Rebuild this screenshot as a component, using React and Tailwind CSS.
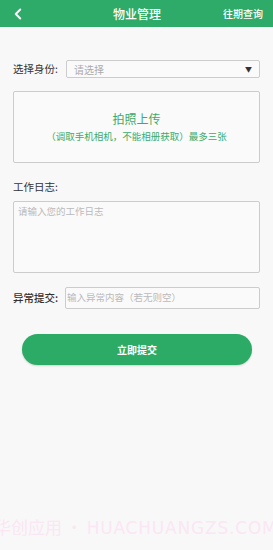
import React from 'react';
import { ChevronLeft } from 'lucide-react';

const font = { fontFamily: '"Noto Sans CJK SC", "Noto Sans", sans-serif' };

const App = () => {
  return (
    <div className="relative w-full min-h-[550px] bg-[#f8f8f8] overflow-hidden" style={font}>
      <div className="h-[27px] bg-[#2eab68] flex items-center justify-between px-[10px] text-white">
        <ChevronLeft size={18} strokeWidth={2.6} className="-ml-[1px]" />
        <h1 className="text-[12px] font-medium leading-none pl-[24px]">物业管理</h1>
        <span className="text-[10px] font-medium leading-none">往期查询</span>
      </div>

      <div className="px-[13px] pt-[33px]">
        <div className="flex items-center h-[18px]">
          <span className="w-[53px] text-[10.5px] text-[#333]">选择身份:</span>
          <div className="flex-1 h-[18px] border border-[#ccc] rounded-[2px] bg-[#fafafa] flex items-center justify-between px-[7px]">
            <span className="text-[10px] text-[#aaa]">请选择</span>
            <span className="text-[7px] text-[#333]">▼</span>
          </div>
        </div>

        <div className="mt-[13px] h-[72px] border border-[#ccc] rounded-[2px] bg-[#fafafa] flex flex-col items-center justify-center text-[#3aac6c]">
          <span className="text-[12px] leading-none">拍照上传</span>
          <span className="text-[9.5px] leading-none mt-[7px]">（调取手机相机，不能相册获取）最多三张</span>
        </div>

        <div className="mt-[19px] text-[10.5px] text-[#333] leading-none">工作日志:</div>
        <div className="mt-[8px] h-[72px] border border-[#ccc] rounded-[2px] bg-[#fafafa] px-[4px] pt-[5px] text-[9.5px] leading-none">
          <span className="text-[#bbb]">请输入您的工作日志</span>
        </div>

        <div className="mt-[14px] flex items-center">
          <span className="w-[52px] text-[10.5px] text-[#333] font-medium">异常提交:</span>
          <div className="flex-1 h-[22px] border border-[#ccc] rounded-[2px] bg-[#fafafa] flex items-center px-[1px] overflow-hidden">
            <span className="text-[9.5px] text-[#bbb] whitespace-nowrap">输入异常内容（若无则空）</span>
          </div>
        </div>

        <button className="mt-[25px] mx-[9px] w-[230px] h-[31px] rounded-full bg-[#2bab66] text-white text-[10px] font-bold shadow-[0_1px_2px_rgba(0,0,0,0.15)]">
          立即提交
        </button>
      </div>

      <div className="absolute left-[-6px] top-[518px] whitespace-nowrap text-[17px] text-[#fbe6f4] leading-none">
        华创应用 · <span className="tracking-[0.8px]" style={{ fontFamily: '"DejaVu Sans", sans-serif' }}>HUACHUANGZS.COM</span>
      </div>
    </div>
  );
};

export default App;
